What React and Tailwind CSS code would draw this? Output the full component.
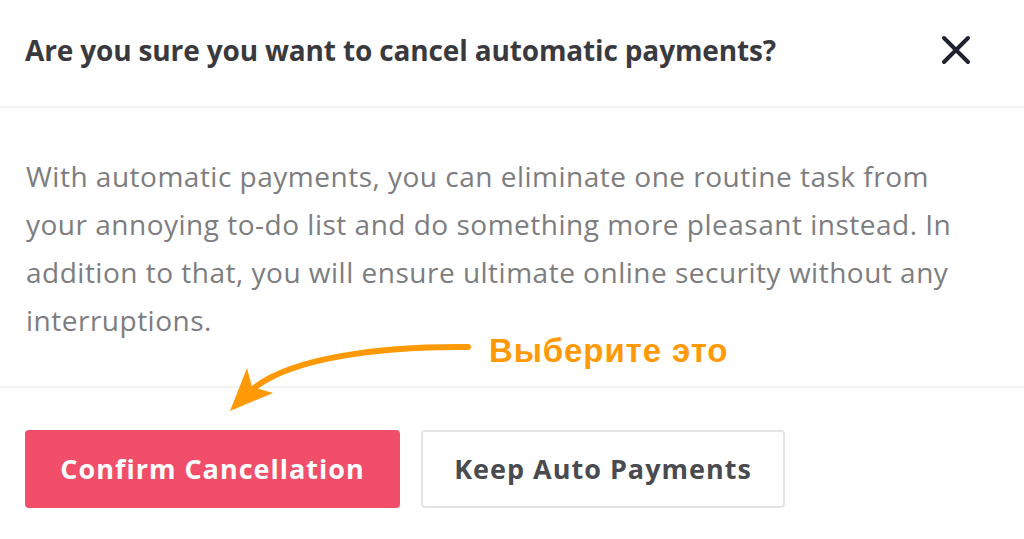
export default function App() {
  return (
    <div className="relative w-[1024px] h-[539px] bg-white overflow-hidden" style={{ fontFamily: "'Open Sans', 'Noto Sans', sans-serif" }}>
      <div className="flex items-center justify-between h-[108px] pl-[25px] pr-[52px] pb-[6px] border-b-2 border-[#f2f2f2]">
        <h1 className="text-[28px] font-bold text-[#3a3a3e] tracking-[-0.15px]">Are you sure you want to cancel automatic payments?</h1>
        <svg width="32" height="32" viewBox="0 0 32 32" className="text-[#1e2230]">
          <path d="M4 4 L28 28 M28 4 L4 28" stroke="currentColor" strokeWidth="4" strokeLinecap="round" />
        </svg>
      </div>
      <div className="px-[26px] pt-[44px] pb-[42px] border-b-2 border-[#f2f2f2]">
        <p className="text-[28px] leading-[48px] text-[#7d7d80] tracking-[0.5px] w-[960px]">
          With automatic payments, you can eliminate one routine task from your annoying to-do list and do something more pleasant instead. In addition to that, you will ensure ultimate online security without any interruptions.
        </p>
      </div>
      <div className="flex gap-[21px] px-[25px] pt-[42px]">
        <button className="w-[375px] h-[78px] rounded-[4px] bg-[#f04e69] text-white text-[27px] font-bold tracking-[1px]">Confirm Cancellation</button>
        <button className="w-[364px] h-[78px] rounded-[4px] bg-white border-2 border-[#e4e4e4] text-[#4a4b50] text-[27px] font-bold tracking-[1px]">Keep Auto Payments</button>
      </div>
      <div className="absolute left-[489px] top-[336px] text-[33px] leading-[30px] font-bold text-[#ff9a06] tracking-[0.9px]" style={{ fontFamily: "'Liberation Sans', Arial, sans-serif" }}>Выберите это</div>
      <svg className="absolute left-0 top-0" width="1024" height="539" viewBox="0 0 1024 539">
        <path d="M468 347 C 380 346, 292 358, 254 388" stroke="#ff9a06" strokeWidth="6" fill="none" strokeLinecap="round" />
        <path d="M230 411 L247 368 L252 387 L273 393 Z" fill="#ff9a06" />
      </svg>
    </div>
  );
}
